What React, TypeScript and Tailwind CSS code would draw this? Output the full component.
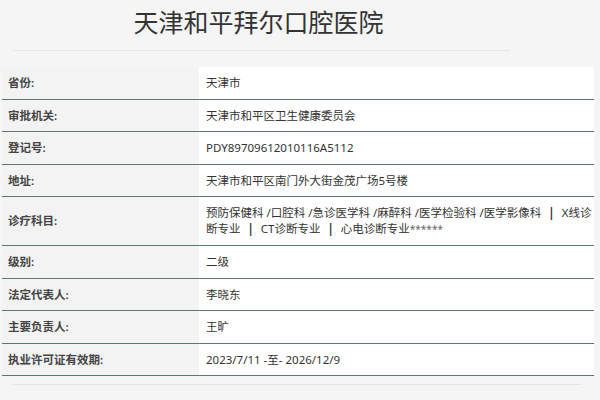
const rows: { label: string; value: React.ReactNode }[] = [
  { label: '省份:', value: '天津市' },
  { label: '审批机关:', value: '天津市和平区卫生健康委员会' },
  { label: '登记号:', value: 'PDY89709612010116A5112' },
  { label: '地址:', value: '天津市和平区南门外大街金茂广场5号楼' },
  {
    label: '诊疗科目:',
    value: (
      <>
        预防保健科 /口腔科 /急诊医学科 /麻醉科 /医学检验科 /医学影像科 <b className="font-bold px-1">|</b> X线诊
        <br />
        断专业 <b className="font-bold px-1">|</b> CT诊断专业 <b className="font-bold px-1">|</b> 心电诊断专业
        <span className="text-[10px] text-[#666]">******</span>
      </>
    ),
  },
  { label: '级别:', value: '二级' },
  { label: '法定代表人:', value: '李晓东' },
  { label: '主要负责人:', value: '王旷' },
  { label: '执业许可证有效期:', value: '2023/7/11 -至- 2026/12/9' },
]

export default function App() {
  return (
    <div
      className="w-[600px] h-[400px] overflow-hidden bg-[#f5f5f5] text-[#333]"
      style={{ fontFamily: '"Noto Sans", "Noto Sans CJK SC", sans-serif' }}
    >
      {/* 标题 */}
      <div className="mx-[13px] w-[497px] h-[51px] border-b border-[#e6e6e6] flex items-center justify-center">
        <h1 className="text-[25px] leading-none text-[#333] mt-[-6px] ml-[-6px]">天津和平拜尔口腔医院</h1>
      </div>

      {/* 信息表 */}
      <div className="ml-[2px] w-[592px] mt-[16px]">
        {rows.map((r) => (
          <div key={r.label} className="flex border-b border-[#5a7a6c]">
            <div className="w-[197px] shrink-0 pl-[6px] flex items-center text-[11.5px] font-semibold text-[#444] bg-[#f3f3f3]">
              {r.label}
            </div>
            <div className="flex-1 bg-white pl-[7px] py-[8px] min-h-[31px] text-[11.5px] leading-[15.5px] text-[#333] flex items-center">
              <div>{r.value}</div>
            </div>
          </div>
        ))}
      </div>

      <div className="ml-[13px] w-[568px] mt-[8px] border-b border-[#e4e4e4]" />
    </div>
  )
}
